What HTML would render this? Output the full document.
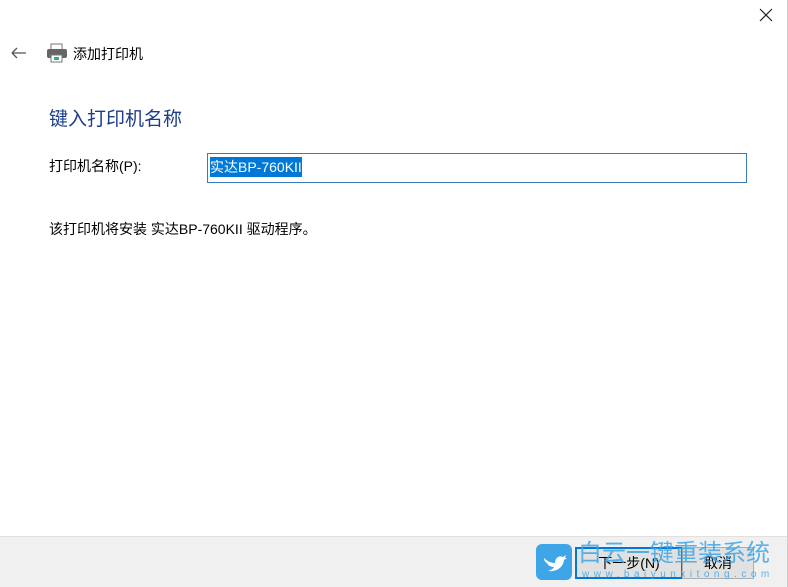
<!DOCTYPE html>
<html><head><meta charset="utf-8"><style>
html,body{margin:0;width:788px;height:587px;overflow:hidden}
body{background:#fff;position:relative;font-family:"Liberation Sans","Noto Sans CJK SC",sans-serif;color:#000}
.a{position:absolute;white-space:nowrap}
</style></head><body>
<div class="a" style="right:0;top:0;width:1px;height:587px;background:#ccc"></div>
<svg class="a" style="left:759px;top:8px" width="14" height="14"><path d="M1 1L13 13M13 1L1 13" stroke="#222" stroke-width="1.2"/></svg>
<svg class="a" style="left:10px;top:46px" width="18" height="14"><path d="M2 7H16M2 7L7 2M2 7L7 12" stroke="#555" stroke-width="1.3" fill="none"/></svg>
<svg class="a" style="left:46px;top:43px" width="22" height="20"><rect x="5" y="1" width="11" height="6" fill="#fff" stroke="#777"/><rect x="1" y="6" width="20" height="9" rx="2" fill="#666"/><rect x="5" y="12" width="11" height="7" fill="#fff" stroke="#777"/><rect x="8" y="14" width="5" height="3" fill="#3a8"/></svg>
<div class="a" style="left:73px;top:44px;font-size:14px">添加打印机</div>
<div class="a" style="left:49px;top:104px;font-size:19px;color:#1c3d8a">键入打印机名称</div>
<div class="a" style="left:49px;top:156px;font-size:14px">打印机名称(P):</div>
<div class="a" style="left:207px;top:153px;width:538px;height:28px;border:1px solid #3b7ab8"></div>
<div class="a" style="left:210px;top:157px;height:20px;background:#0078d7;color:#fff;font-size:14px;line-height:20px">实达BP-760KII</div>
<div class="a" style="left:49px;top:219px;font-size:14px">该打印机将安装 实达BP-760KII 驱动程序。</div>
<div class="a" style="left:0;top:536px;width:787px;height:51px;background:#f0f0f0;border-top:1px solid #e0e0e0"></div>
<div class="a" style="left:575px;top:547px;width:104px;height:28px;border:2px solid #0078d7;background:#e1e1e1;font-size:14px;text-align:center;line-height:28px">下一步(N)</div>
<div class="a" style="left:682px;top:547px;width:70px;height:30px;border:1px solid #adadad;background:#e1e1e1;font-size:14px;text-align:center;line-height:30px">取消</div>
<svg class="a" style="left:536px;top:544px" width="36" height="36"><rect width="36" height="36" rx="6" fill="#3ea6e8"/><path d="M8 14C12 18 16 19 19 19C19 14 23 11 27 13L30 11L29 14L31 14L28 16C27 24 20 28 12 27C15 26 17 25 18 23C14 23 12 21 11 19C9 18 8 16 8 14Z" fill="#fff"/></svg>
<div class="a" style="left:578px;top:540px;font-size:24px;line-height:28px;color:#3ea6e8;opacity:.85">白云一键重装系统</div>
<div class="a" style="left:582px;top:569px;font-size:10px;color:#3ea6e8;letter-spacing:4.5px;opacity:.85">www.baiyunxitong.com</div>
</body></html>
